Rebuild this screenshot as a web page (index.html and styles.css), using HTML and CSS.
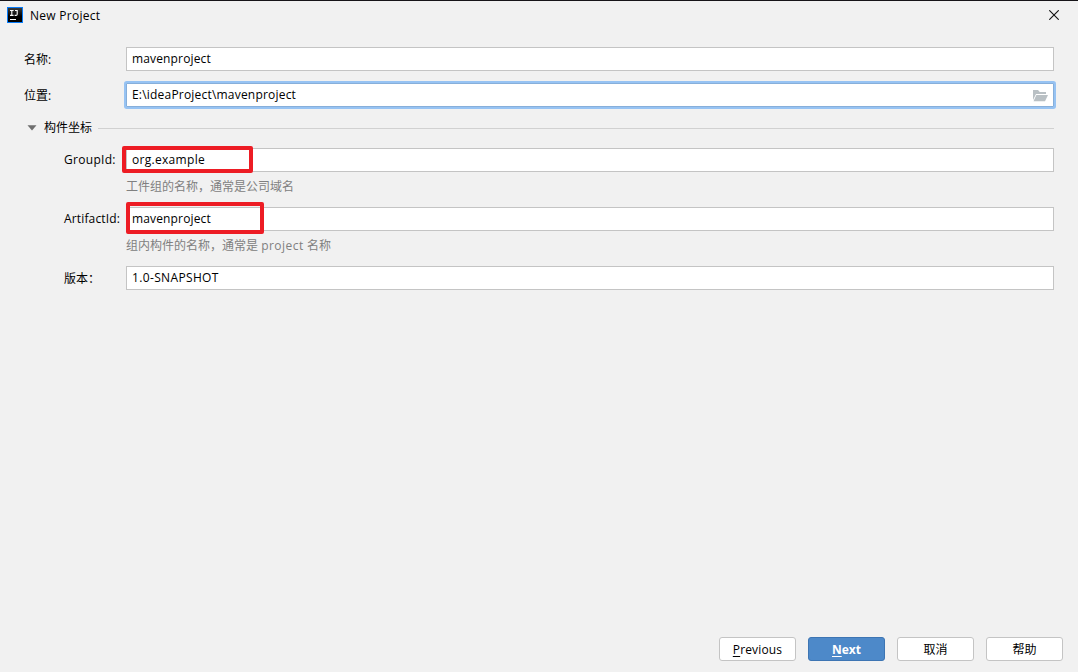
FILE: index.html
```html
<!DOCTYPE html>
<html lang="zh-CN">
<head>
  <meta charset="UTF-8">
  <title>New Project</title>
  <link rel="stylesheet" href="styles.css">
</head>
<body>
  <div class="dialog">
    <header class="titlebar">
      <svg class="logo" width="16" height="16" viewBox="0 0 16 16">
        <defs>
          <linearGradient id="logoBg" x1="0" y1="0" x2="0" y2="1">
            <stop offset="0" stop-color="#3a3a3a"/>
            <stop offset=".6" stop-color="#000"/>
          </linearGradient>
        </defs>
        <rect width="16" height="16" fill="#087cfa"/>
        <rect x="1" y="1" width="14" height="14" fill="url(#logoBg)"/>
        <path d="M3 3.5h3.6M3 8.4h3.6M4.8 3.5v5M8 3.5h2.6M10.2 3v4.2q0 1.2-1.2 1.2H7.6" fill="none" stroke="#fff" stroke-width="1.1"/>
        <path d="M3 12.5h6" stroke="#fff"/>
      </svg>
      <span class="title">New Project</span>
      <svg class="close" width="10" height="10" viewBox="0 0 10 10">
        <path d="M.3.3l9.4 9.4M9.7.3L.3 9.7" stroke="#111" stroke-width="1.1"/>
      </svg>
    </header>

    <main class="form">
      <div class="row">
        <label class="label cjk">名称:</label>
        <div class="field"><span class="latin">mavenproject</span></div>
      </div>
      <div class="row row-location">
        <label class="label cjk">位置:</label>
        <div class="field focused">
          <span class="latin path">E:\ideaProject\mavenproject</span>
          <svg class="folder" width="15" height="12" viewBox="0 0 15 12">
            <path d="M0 10V0h5l1.8 2H13v2H3z" fill="#b9c0c4"/>
            <path d="M3.4 5H15l-3 6.3H.5z" fill="#b9c0c4"/>
          </svg>
        </div>
      </div>

      <div class="section">
        <svg class="arrow" width="10" height="6" viewBox="0 0 10 6"><path d="M.5.3h9L5 5.5z" fill="#6e6e6e"/></svg>
        <span>构件坐标</span>
        <i class="line"></i>
      </div>

      <div class="row row-sub">
        <label class="label"><span class="latin group">GroupId:</span></label>
        <div class="field"><span class="latin group">org.example</span><i class="mark mark-group"></i></div>
      </div>
      <p class="hint">工件组的名称，通常是公司域名</p>
      <div class="row row-sub">
        <label class="label"><span class="latin">ArtifactId:</span></label>
        <div class="field"><span class="latin">mavenproject</span><i class="mark mark-artifact"></i></div>
      </div>
      <p class="hint">组内构件的名称，通常是 <span class="latin">project</span> 名称</p>
      <div class="row row-sub">
        <label class="label cjk">版本：</label>
        <div class="field"><span class="latin version">1.0-SNAPSHOT</span></div>
      </div>
    </main>

    <footer class="buttons">
      <button><span class="latin"><u>P</u>revious</span></button>
      <button class="primary"><u>N</u>ext</button>
      <button>取消</button>
      <button>帮助</button>
    </footer>
  </div>
</body>
</html>
```
FILE: styles.css
```css
* { box-sizing: border-box; margin: 0; padding: 0; }
body {
  font: 12px/16px "Open Sans", "Noto Sans CJK SC", sans-serif;
  color: #000;
  background: #f1f1f1;
  overflow: hidden;
}
svg { display: block; flex: none; }
.latin { letter-spacing: .15px; }

.dialog { height: 672px; border-top: 1px solid #161418; display: flex; flex-direction: column; }

/* Title bar */
.titlebar { display: flex; align-items: center; height: 29px; padding: 0 19px 1px 7px; }
.title { margin-left: 7px; padding-top: 2px; flex: 1; letter-spacing: .28px; }

/* Form */
.form { flex: 1; padding: 17px 24px 0; }
.row { display: flex; align-items: center; height: 24px; }
.label { width: 102px; flex: none; white-space: nowrap; }
.cjk { padding-top: 2px; }
.row-location { margin-top: 12px; }
.row-sub { padding-left: 40px; }
.row-sub .label { width: 62px; }
.field {
  position: relative;
  flex: 1;
  height: 24px;
  display: flex;
  align-items: center;
  padding: 0 5px;
  border: 1px solid #c4c4c4;
  background: #fff;
}
.focused { border-color: #87afda; box-shadow: 0 0 0 2px #97c3f3; border-radius: 1px; justify-content: space-between; }
.folder { position: relative; top: 1px; }
.path { letter-spacing: .2px; }
.group { letter-spacing: .3px; }
.version { letter-spacing: .35px; }

.section { display: flex; align-items: center; height: 16px; margin: 13px 0 12px; padding-left: 3px; }
.arrow { margin-right: 7px; }
.line { flex: 1; height: 1px; margin-left: 6px; background: #d1d1d1; }

.hint { height: 35px; padding: 7px 0 0 102px; color: #808080; }
.hint .latin { letter-spacing: .5px; }

/* Red highlight frames */
.mark { position: absolute; border: 4px solid #ed1c24; border-radius: 2px; }
.mark-group { left: -5px; top: -3px; width: 131px; height: 27px; }
.mark-artifact { left: -1px; top: -6px; width: 138px; height: 32px; }

/* Buttons */
.buttons { display: flex; justify-content: flex-end; gap: 12px; padding: 0 15px 11px 0; }
.buttons button {
  width: 77px;
  height: 24px;
  padding-top: 2px;
  border: 1px solid #c4c4c4;
  border-radius: 3px;
  background: #fff;
  font: inherit;
  color: #000;
}
.buttons .primary { background: #4d89c9; border-color: #3d75b3; color: #fff; font-weight: bold; }
u { text-underline-offset: 2px; }
```
